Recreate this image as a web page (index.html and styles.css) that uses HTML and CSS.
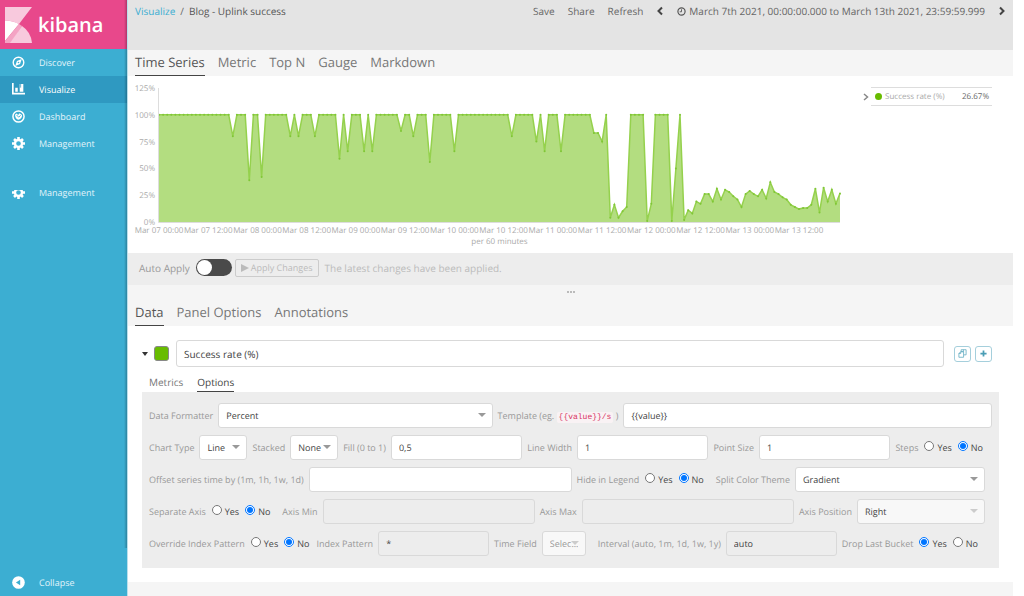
FILE: index.html
```html
<!DOCTYPE html>
<html lang="en">
<head>
    <meta charset="UTF-8">
    <meta name="viewport" content="width=device-width, initial-scale=1.0">
    <title>Blog - Uplink success - Kibana</title>
    <link rel="stylesheet" href="styles.css">
</head>
<body>
    <nav class="sidebar">
        <a class="brand" href="#">
            <svg class="brand-mark" viewBox="0 0 27 36" width="27" height="36">
                <path fill="#f8c9dd" d="M0 0H27L14 17Q8 13.500 0 13.500Z"/>
                <path fill="#fff" d="M0 13.500Q8 13.500 14 17L0 34Z"/>
                <path fill="#f4a3c4" d="M14 17L17 19L6 36H0V34Z"/>
                <path fill="#f8c9dd" d="M17 19Q26 25 27 36H5Z"/>
            </svg>
            <span class="brand-name">kibana</span>
        </a>
        <a class="nav-item" href="#">
            <svg class="nav-icon" viewBox="0 0 14 14"><circle cx="7" cy="7" r="5.700" fill="none" stroke="#fff" stroke-width="1.500"/><path fill="#fff" fill-rule="evenodd" d="M10.500 3.300L8.700 8.500L3.500 10.700L5.300 5.500ZM7 6.100A.9.9 0 1 0 7 7.900A.9.9 0 1 0 7 6.100Z"/></svg>
            <span>Discover</span>
        </a>
        <a class="nav-item active" href="#">
            <svg class="nav-icon" viewBox="0 0 14 14"><path fill="#fff" d="M0 0H1.800V10.500H14V12.300H0ZM3.500 5H6.200V9.300H3.500ZM8.300 1H12.200V9.300H8.300Z"/><path stroke="#2f99c1" stroke-width=".8" d="M9.300 1V5"/></svg>
            <span>Visualize</span>
        </a>
        <a class="nav-item" href="#">
            <svg class="nav-icon" viewBox="0 0 14 14"><circle cx="7" cy="7" r="6" fill="none" stroke="#fff" stroke-width="1.600"/><path fill="#fff" d="M3.200 5L5 3.800L6.600 5.400L8.200 3.600L10.800 5.500Q11 9.500 7 10.600Q3.600 9.600 3.200 5Z"/><path stroke="#3caed2" stroke-width="1" fill="none" d="M5 5.500L7.200 7.700L9.300 5.800"/></svg>
            <span>Dashboard</span>
        </a>
        <a class="nav-item" href="#">
            <svg class="nav-icon" viewBox="0 0 14 14"><g fill="none" stroke="#fff"><circle cx="7" cy="7" r="3.800" stroke-width="2.600"/><path stroke-width="2.800" d="M7 0V3M7 11V14M0 7H3M11 7H14M2.200 2.200L4 4M10 10L11.800 11.800M11.800 2.200L10 4M4 10L2.200 11.800"/></g></svg>
            <span>Management</span>
        </a>
        <div class="nav-clip">
            <a class="nav-item" href="#">
                <svg class="nav-icon" viewBox="0 0 14 14"><g fill="none" stroke="#fff"><circle cx="7" cy="7" r="3.800" stroke-width="2.600"/><path stroke-width="2.800" d="M7 0V3M7 11V14M0 7H3M11 7H14M2.200 2.200L4 4M10 10L11.800 11.800M11.800 2.200L10 4M4 10L2.200 11.800"/></g></svg>
                <span>Management</span>
            </a>
        </div>
        <a class="nav-item collapse" href="#">
            <svg class="nav-icon" viewBox="0 0 14 14"><circle cx="7" cy="7" r="6.800" fill="#fff"/><path fill="#3caed2" d="M8.800 4V10L4.200 7Z"/></svg>
            <span>Collapse</span>
        </a>
    </nav>

    <main class="content">
        <header class="topbar">
            <div class="breadcrumb"><a href="#">Visualize</a><span>/</span><span class="current">Blog - Uplink success</span></div>
            <div class="top-actions">
                <button>Save</button>
                <button>Share</button>
                <button>Refresh</button>
                <button class="arrow" aria-label="Previous period"><svg viewBox="0 0 8 10" width="8" height="10"><path d="M6 1.500L2.500 5L6 8.500" fill="none" stroke="#444" stroke-width="2"/></svg></button>
                <button class="time-range"><svg viewBox="0 0 10 10" width="9" height="9"><circle cx="5" cy="5" r="4" fill="none" stroke="#555" stroke-width="1.300"/><path d="M5 2.500V5.300H3" fill="none" stroke="#555"/></svg>March 7th 2021, 00:00:00.000 to March 13th 2021, 23:59:59.999</button>
                <button class="arrow" aria-label="Next period"><svg viewBox="0 0 8 10" width="8" height="10"><path d="M2 1.500L5.500 5L2 8.500" fill="none" stroke="#444" stroke-width="2"/></svg></button>
            </div>
        </header>

        <div class="tabs">
            <button class="tab active">Time Series</button>
            <button class="tab">Metric</button>
            <button class="tab">Top N</button>
            <button class="tab">Gauge</button>
            <button class="tab">Markdown</button>
        </div>

        <section class="visualization">
            <svg id="chart" class="chart" role="img" aria-label="Success rate per 60 minutes"></svg>
            <div class="legend">
                <svg viewBox="0 0 6 8" width="6" height="8"><path d="M1 1L4.500 4L1 7" fill="none" stroke="#888" stroke-width="1.500"/></svg>
                <div class="legend-item">
                    <span class="legend-dot"></span>
                    <span class="legend-name">Success rate (%)</span>
                    <span class="legend-value">26.67%</span>
                </div>
            </div>
        </section>

        <div class="apply-bar">
            <label for="auto-apply">Auto Apply</label>
            <input type="checkbox" id="auto-apply" class="toggle">
            <button class="apply-button" disabled><svg viewBox="0 0 8 8" width="8" height="8"><path d="M0 0L8 4L0 8Z" fill="#bbb"/></svg>Apply Changes</button>
            <span class="apply-status">The latest changes have been applied.</span>
        </div>

        <div class="resizer"><i></i><i></i><i></i></div>

        <div class="tabs editor-tabs">
            <button class="tab active">Data</button>
            <button class="tab">Panel Options</button>
            <button class="tab">Annotations</button>
        </div>

        <section class="editor">
            <div class="series-head">
                <button class="series-caret" aria-label="Toggle series"></button>
                <button class="swatch" aria-label="Series color"></button>
                <input type="text" class="series-name" aria-label="Series label" value="Success rate (%)">
                <div class="series-actions">
                    <button class="icon-button" aria-label="Clone series"><svg viewBox="0 0 10 10" width="9" height="9"><path d="M3.500 3V.8H9V6.500H6.500M3 3H6.200V9.200H1V5ZM3 3V5H1M6 .8V3H3.500" fill="none" stroke="#64adc2" stroke-width=".9"/></svg></button>
                    <button class="icon-button" aria-label="Add series"><svg viewBox="0 0 8 8" width="7" height="7"><path d="M4 .5V7.500M.5 4H7.500" stroke="#4a9db5" stroke-width="2"/></svg></button>
                </div>
            </div>

            <div class="subtabs">
                <button class="subtab">Metrics</button>
                <button class="subtab active">Options</button>
            </div>

            <form class="options">
                <div class="row">
                    <label for="formatter">Data Formatter</label>
                    <div class="select formatter"><select id="formatter"><option>Percent</option></select></div>
                    <label for="template">Template (eg. <code>{{value}}/s</code> )</label>
                    <input type="text" id="template" class="template" value="{{value}}">
                </div>
                <div class="row inset">
                    <label for="chart-type">Chart Type</label>
                    <div class="select short"><select id="chart-type"><option>Line</option></select></div>
                    <label for="stacked">Stacked</label>
                    <div class="select short"><select id="stacked"><option>None</option></select></div>
                    <label for="fill">Fill (0 to 1)</label>
                    <input type="text" id="fill" value="0,5">
                    <label for="line-width">Line Width</label>
                    <input type="text" id="line-width" value="1">
                    <label for="point-size">Point Size</label>
                    <input type="text" id="point-size" value="1">
                    <fieldset class="radios">
                        <legend>Steps</legend>
                        <label><input type="radio" name="steps">Yes</label>
                        <label><input type="radio" name="steps" checked>No</label>
                    </fieldset>
                </div>
                <div class="row inset">
                    <label for="offset">Offset series time by (1m, 1h, 1w, 1d)</label>
                    <input type="text" id="offset">
                    <fieldset class="radios spaced">
                        <legend>Hide in Legend</legend>
                        <label><input type="radio" name="hide">Yes</label>
                        <label><input type="radio" name="hide" checked>No</label>
                    </fieldset>
                    <label for="theme">Split Color Theme</label>
                    <div class="select theme"><select id="theme"><option>Gradient</option></select></div>
                </div>
                <div class="row inset">
                    <fieldset class="radios spaced">
                        <legend>Separate Axis</legend>
                        <label><input type="radio" name="axis">Yes</label>
                        <label><input type="radio" name="axis" checked>No</label>
                    </fieldset>
                    <label for="axis-min">Axis Min</label>
                    <input type="text" id="axis-min" disabled>
                    <label for="axis-max">Axis Max</label>
                    <input type="text" id="axis-max" disabled>
                    <label for="axis-position">Axis Position</label>
                    <div class="select position"><select id="axis-position" disabled><option>Right</option></select></div>
                </div>
                <div class="row inset">
                    <fieldset class="radios">
                        <legend>Override Index Pattern</legend>
                        <label><input type="radio" name="override">Yes</label>
                        <label><input type="radio" name="override" checked>No</label>
                    </fieldset>
                    <label for="index-pattern">Index Pattern</label>
                    <input type="text" id="index-pattern" value="*" disabled>
                    <label for="time-field">Time Field</label>
                    <div class="select time-field spaced"><select id="time-field" disabled><option>Selec...</option></select></div>
                    <label for="interval">Interval (auto, 1m, 1d, 1w, 1y)</label>
                    <input type="text" id="interval" value="auto" disabled>
                    <fieldset class="radios spaced">
                        <legend>Drop Last Bucket</legend>
                        <label><input type="radio" name="drop" checked>Yes</label>
                        <label><input type="radio" name="drop">No</label>
                    </fieldset>
                </div>
            </form>
        </section>
    </main>
    <script src="script.js"></script>
</body>
</html>
```
FILE: styles.css
```css
* {
    box-sizing: border-box;
}
body {
    margin: 0;
    padding-right: 11px;
    min-height: 100vh;
    display: flex;
    background-color: #fff;
    color: #444;
    font-family: "Open Sans", sans-serif;
    font-size: 10px;
    text-rendering: geometricPrecision;
}
button,
input,
select {
    text-rendering: inherit;
}
button {
    border: none;
    background: none;
    padding: 0;
    color: inherit;
    font-family: inherit;
    font-size: inherit;
    cursor: pointer;
}
a {
    text-decoration: none;
}

/* Sidebar */
.sidebar {
    position: relative;
    flex: 0 0 128px;
    display: flex;
    flex-direction: column;
    background-color: #3caed2;
    border-right: 1px solid #b9dfec;
}
.sidebar::after {
    content: "";
    position: absolute;
    top: 0;
    right: 0;
    bottom: 48px;
    width: 3px;
    background: linear-gradient(to right, rgba(0, 0, 0, 0), rgba(0, 0, 0, 0.25));
}
.brand {
    display: flex;
    align-items: center;
    gap: 6px;
    height: 49px;
    padding-left: 5px;
    background-color: #e8488b;
    color: #fff;
}
.brand-name {
    font-size: 20px;
    font-weight: 600;
}
.nav-item {
    display: flex;
    align-items: center;
    gap: 14px;
    height: 27px;
    flex-shrink: 0;
    padding-left: 12px;
    color: #e3f4fa;
    font-size: 9px;
}
.nav-item.active {
    background-color: #2f99c1;
    color: #fff;
}
.nav-icon {
    width: 13px;
    height: 13px;
}
.nav-clip {
    display: flex;
    flex-direction: column;
    justify-content: flex-end;
    height: 16px;
    margin-top: 33px;
    overflow: hidden;
}
.collapse {
    margin-top: auto;
}

/* Header */
.content {
    flex: 1;
    min-width: 0;
    background-color: #f5f5f5;
}
.topbar {
    display: flex;
    justify-content: space-between;
    height: 50px;
    padding: 4px 7px;
    background-color: #e4e4e4;
    line-height: 14px;
}
.breadcrumb {
    display: flex;
    gap: 5px;
    color: #666;
}
.breadcrumb a {
    color: #3caed2;
}
.breadcrumb .current {
    color: #555;
}
.top-actions {
    display: flex;
    align-items: flex-start;
    gap: 13px;
    color: #666;
}
.top-actions button {
    display: flex;
    align-items: center;
    height: 14px;
    white-space: nowrap;
}
.top-actions .time-range {
    gap: 3px;
}

/* Tabs */
.tabs {
    display: flex;
    gap: 13px;
    height: 26px;
    padding: 0 7px;
}
.tab {
    padding-bottom: 1px;
    border-bottom: 1px solid transparent;
    color: #777;
    font-size: 13px;
}
.tab.active {
    border-color: #444;
    color: #555;
}
.editor-tabs {
    height: 27px;
}

/* Chart */
.visualization {
    display: flex;
    align-items: flex-start;
    gap: 23px;
    height: 177px;
    padding: 0 21px 0 7px;
    background-color: #fff;
}
.chart {
    flex: 1;
    min-width: 0;
    height: 177px;
    overflow: visible;
}
.chart text {
    fill: #aaa;
    font-size: 8px;
}
.axis {
    stroke: #ddd;
}
.area {
    fill: #b3dd80;
}
.line {
    fill: none;
    stroke: #95d14d;
    stroke-width: 1.5px;
}
.point {
    fill: #7fc636;
}
.legend {
    display: flex;
    align-items: center;
    gap: 2px;
    margin-top: 11px;
    font-size: 8px;
}
.legend-item {
    display: flex;
    align-items: center;
    gap: 3px;
    width: 121px;
    height: 19px;
    padding: 0 3px 0 4px;
    border-top: 1px solid #ddd;
    border-bottom: 1px solid #ddd;
}
.legend-dot {
    width: 7px;
    height: 7px;
    border-radius: 50%;
    background-color: #68bc00;
}
.legend-name {
    color: #aaa;
}
.legend-value {
    margin-left: auto;
    color: #666;
}

/* Apply bar */
.apply-bar {
    display: flex;
    align-items: center;
    height: 32px;
    padding: 0 11px 3px;
    background-color: #ededed;
    color: #999;
}
.toggle {
    appearance: none;
    width: 36px;
    height: 17px;
    margin: 0 3px 0 6px;
    border-radius: 9px;
    background-color: #4a4a4a;
    cursor: pointer;
}
.toggle::before {
    content: "";
    display: block;
    width: 15px;
    height: 15px;
    margin: 1px;
    border-radius: 50%;
    background-color: #fff;
}
.apply-button {
    display: flex;
    align-items: center;
    gap: 2px;
    height: 18px;
    padding: 0 5px;
    border: 1px solid #ccc;
    border-radius: 2px;
    color: #bbb;
    font-size: 9px;
}
.apply-status {
    margin-left: 6px;
    color: #bbb;
}
.resizer {
    display: flex;
    justify-content: center;
    align-items: center;
    gap: 1px;
    height: 14px;
}
.resizer i {
    width: 2px;
    height: 2px;
    background-color: #bbb;
}

/* Series editor */
.editor {
    height: 256px;
    padding: 14px 14px 0;
    background-color: #fff;
}
.series-head {
    display: flex;
    align-items: center;
    padding-right: 7px;
}
.series-caret {
    border: 3px solid transparent;
    border-top: 4px solid #333;
    border-bottom: none;
}
.swatch {
    width: 15px;
    height: 15px;
    margin: 0 7px 0 6px;
    border: 1px solid #888;
    border-radius: 3px;
    background-color: #68bc00;
}
input[type="text"],
select {
    height: 25px;
    padding: 0 7px;
    border: 1px solid #d9d9d9;
    border-radius: 3px;
    background-color: #fff;
    color: #444;
    font-family: inherit;
    font-size: 9px;
}
input[type="text"].series-name {
    flex: 1;
    height: 27px;
    font-size: 10px;
}
.series-actions {
    display: flex;
    gap: 4px;
    margin-left: 10px;
}
.icon-button {
    display: flex;
    align-items: center;
    justify-content: center;
    min-width: 17px;
    height: 16px;
    padding: 0 3px;
    border: 1px solid #a5cfdc;
    border-radius: 3px;
}
.subtabs {
    display: flex;
    gap: 14px;
    height: 25px;
    padding-left: 7px;
}
.subtab {
    padding-top: 5px;
    border-bottom: 1px solid transparent;
    color: #777;
}
.subtab.active {
    border-color: #444;
    color: #444;
}

/* Options form */
.options {
    display: flex;
    flex-direction: column;
    gap: 7px;
    padding: 11px 7px 12px;
    background-color: #ededed;
    color: #999;
    font-size: 9px;
}
.row {
    display: flex;
    align-items: center;
    gap: 5px;
    white-space: nowrap;
}
.inset {
    padding-right: 7px;
}
.row input[type="text"] {
    flex: 1;
    min-width: 0;
}
.row input[type="text"].template {
    flex: 9;
}
.row input[type="text"]:disabled {
    background-color: #ededed;
}
.select {
    position: relative;
}
.select::after {
    content: "";
    position: absolute;
    top: 10px;
    right: 7px;
    border: 4px solid transparent;
    border-top-color: #999;
    border-bottom: none;
    pointer-events: none;
}
.select select {
    appearance: none;
    width: 100%;
    display: block;
}
.select select:disabled {
    background-color: #f8f8f8;
    opacity: 1;
}
.select:has(select:disabled)::after {
    border-top-color: #ccc;
}
.formatter {
    flex: 7;
}
.short {
    width: 48px;
}
.theme {
    width: 190px;
}
.position {
    width: 128px;
}
.time-field {
    width: 44px;
}
.time-field select {
    color: #999;
}
.spaced {
    margin-right: 7px;
}
code {
    padding: 1px 2px;
    border-radius: 2px;
    background-color: #f9f2f4;
    color: #d8305f;
    font-family: "Liberation Mono", monospace;
    font-size: 8px;
}
.radios {
    display: flex;
    align-items: center;
    gap: 6px;
    min-width: 0;
    margin-top: 0;
    margin-bottom: 0;
    margin-left: 0;
    padding: 0;
    border: none;
}
.radios legend {
    float: left;
    padding: 0;
}
.radios label {
    display: flex;
    align-items: center;
    gap: 3px;
    color: #444;
}
.radios input {
    width: 10px;
    height: 10px;
    margin: 0 0 3px;
}
```
FILE: script.js
```js
// Hourly success rate, in percent. [value, number of hours]
var runs = [
    [100, 18], [80, 1], [100, 3], [39, 1], [100, 2], [42, 1], [100, 6],
    [80, 1], [100, 1], [80, 1], [100, 3], [80, 1], [100, 5],
    [59, 1], [100, 1], [66, 1], [100, 3], [66, 1], [100, 1], [66, 1], [100, 6],
    [85, 1], [100, 2], [80, 1], [100, 3], [56, 1], [100, 5], [66, 1], [100, 13],
    [80, 1], [100, 5], [75, 1], [100, 1], [66, 1], [100, 3], [66, 1], [100, 7],
    [83, 2], [75, 1], [100, 1], [4, 1], [16, 1], [4, 1], [10, 1], [14, 1],
    [100, 4], [1, 1], [17, 1], [100, 4], [1, 1], [50, 1], [100, 1], [2, 1],
    [11, 1], [8, 1], [19, 1], [17, 1], [26, 2], [19, 1], [31, 1], [21, 1],
    [30, 1], [28, 1], [24, 1], [21, 1], [14, 1], [26, 1], [29, 1], [26, 1],
    [24, 1], [30, 1], [22, 1], [37, 1], [28, 1], [26, 1], [23, 1], [21, 1],
    [16, 1], [14, 1], [12, 1], [13, 2], [16, 1], [31, 1], [9, 1], [32, 1],
    [19, 1], [30, 1], [17, 1], [26.67, 1]
];
var values = [];
runs.forEach(function (run) {
    for (var i = 0; i < run[1]; i++) {
        values.push(run[0]);
    }
});

var svg = document.getElementById('chart');

function add(name, attributes, text) {
    var node = document.createElementNS('http://www.w3.org/2000/svg', name);
    for (var key in attributes) {
        node.setAttribute(key, attributes[key]);
    }
    if (text) {
        node.textContent = text;
    }
    svg.appendChild(node);
}

function drawChart() {
    var left = 24;
    var bottom = 146;
    var plotHeight = 134;
    var right = svg.getBoundingClientRect().width;
    var step = (right - left) / (values.length - 1);

    function y(value) {
        return bottom - value / 125 * plotHeight;
    }

    svg.textContent = '';
    var points = values.map(function (value, i) {
        return (left + i * step).toFixed(1) + ',' + y(value).toFixed(1);
    });

    add('polygon', { class: 'area', points: left + ',' + bottom + ' ' + points.join(' ') + ' ' + right + ',' + bottom });
    add('polyline', { class: 'line', points: points.join(' ') });
    points.forEach(function (point) {
        var xy = point.split(',');
        add('circle', { class: 'point', cx: xy[0], cy: xy[1], r: 1 });
    });
    add('path', { class: 'axis', d: 'M' + (left - 0.5) + ' 12V' + (bottom + 0.5) + 'H' + right, fill: 'none' });

    for (var tick = 0; tick <= 125; tick += 25) {
        add('text', { x: left - 4, y: y(tick) + 3, 'text-anchor': 'end' }, tick + '%');
    }
    for (var hour = 0; hour < values.length; hour += 12) {
        var day = '0' + (7 + Math.floor(hour / 24));
        var label = 'Mar ' + day.slice(-2) + (hour % 24 ? ' 12:00' : ' 00:00');
        add('text', { x: left + hour * step, y: 157, 'text-anchor': 'middle' }, label);
    }
    add('text', { x: (left + right) / 2, y: 168, 'text-anchor': 'middle' }, 'per 60 minutes');
}

drawChart();
window.addEventListener('resize', drawChart);
```
